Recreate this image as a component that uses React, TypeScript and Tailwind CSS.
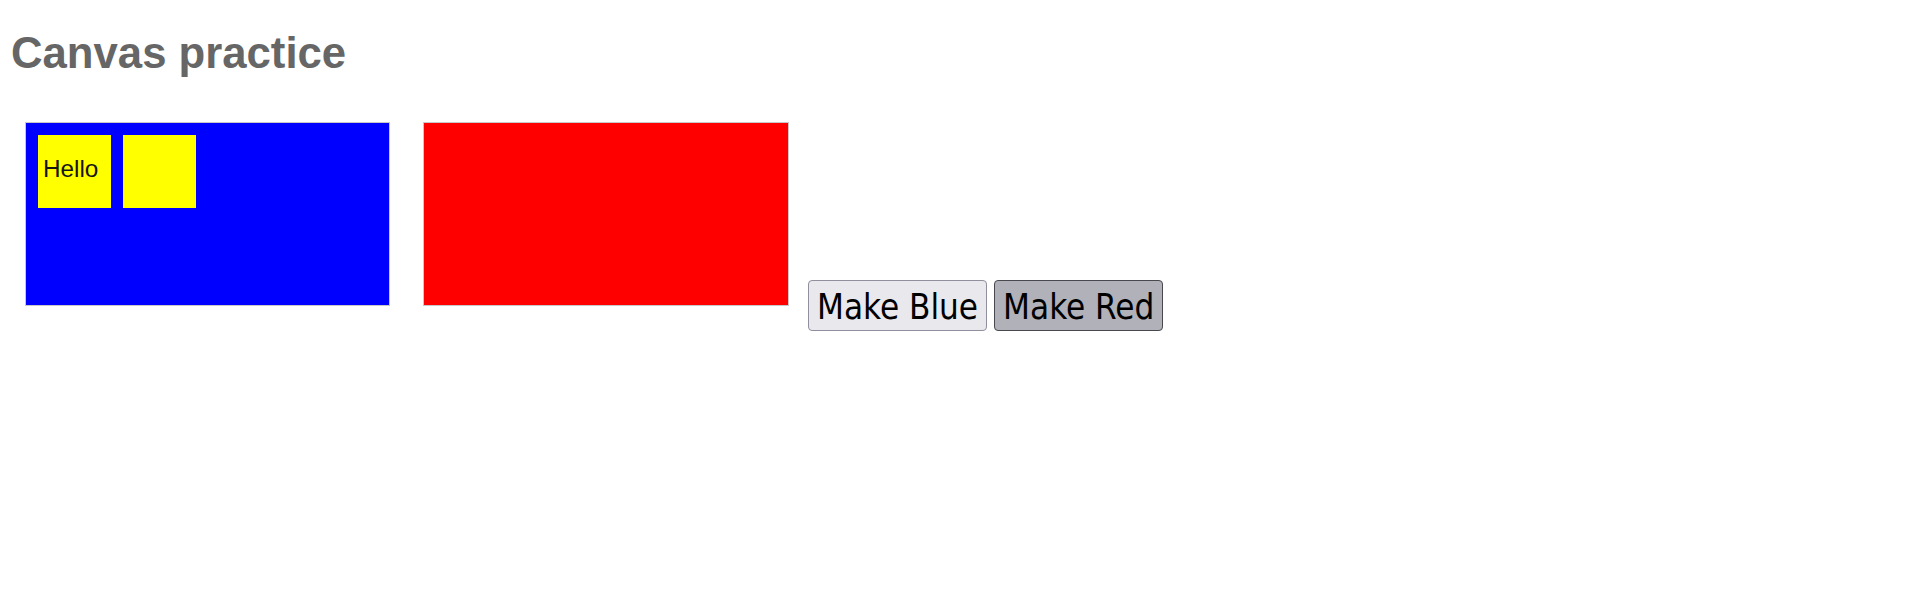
import React from 'react';

const Square: React.FC<{ label?: string }> = ({ label }) => (
  <div className="w-[73px] h-[73px] bg-[#ffff00] pl-[5px] pt-[22px]">
    {label && (
      <span className="block leading-none text-[24.3px] text-[#151515] font-['Liberation_Sans',Arial,sans-serif]">
        {label}
      </span>
    )}
  </div>
);

export default function App() {
  return (
    <div className="min-h-screen bg-white">
      <h1 className="ml-[11px] pt-[31px] text-[43.7px] leading-none font-bold text-[#666666] font-['Liberation_Sans',Arial,sans-serif]">
        Canvas practice
      </h1>

      <div className="flex items-start mt-[47px]">
        {/* blue canvas */}
        <div className="ml-[25px] w-[365px] h-[184px] border border-[#c8c8c8] bg-[#0000ff] p-[12px] flex gap-[12px] items-start">
          <Square label="Hello" />
          <Square />
        </div>

        {/* red canvas */}
        <div className="ml-[33px] w-[366px] h-[184px] border border-[#c8c8c8] bg-[#ff0000]" />

        {/* controls */}
        <div className="ml-[19px] mt-[158px] flex gap-[7px] font-['DejaVu_Sans_Condensed','DejaVu_Sans',Verdana,sans-serif]">
          <button className="px-[8px] pt-[9px] pb-[6px] leading-none text-[34.7px] text-black bg-[#e9e9ed] border border-[#8f8f9d] rounded-[4px]">
            Make Blue
          </button>
          <button className="px-[8px] pt-[9px] pb-[6px] leading-none text-[34.7px] text-black bg-[#b1b1b9] border border-[#48484e] rounded-[4px]">
            Make Red
          </button>
        </div>
      </div>
    </div>
  );
}
